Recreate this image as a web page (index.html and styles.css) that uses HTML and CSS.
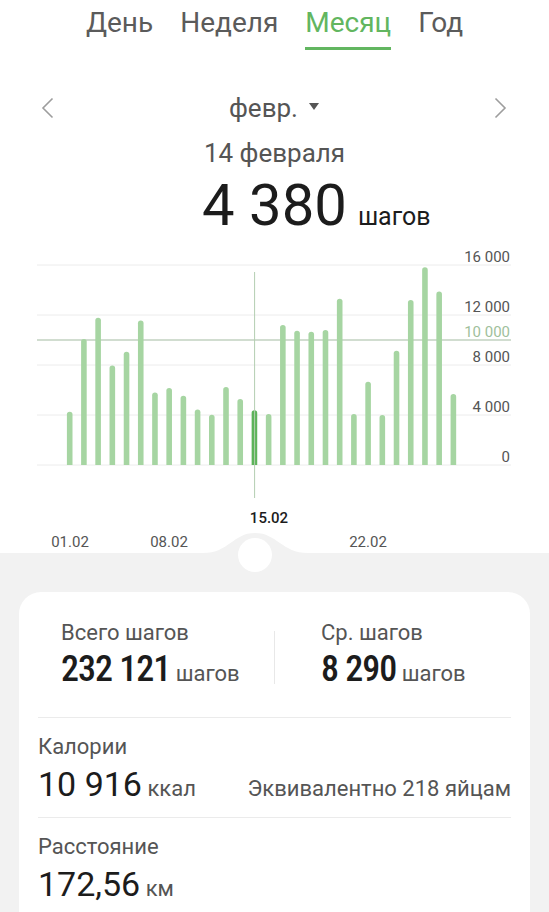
FILE: index.html
```html
<!DOCTYPE html>
<html lang="ru">

<head>
    <meta charset="UTF-8">
    <meta name="viewport" content="width=device-width, initial-scale=1.0">
    <title>Шаги</title>
    <link rel="stylesheet" href="styles.css">
</head>

<body>
    <!-- Переключатель периода -->
    <nav class="tabs">
        <span class="tab">День</span>
        <span class="tab">Неделя</span>
        <span class="tab tab--active">Месяц</span>
        <span class="tab">Год</span>
    </nav>

    <div class="period">
        <svg class="period__arrow" width="13" height="22" viewBox="0 0 13 22">
            <path d="M11.5 1.5 L2 11 L11.5 20.5" />
        </svg>
        <div class="period__month">февр.<span class="period__caret"></span></div>
        <svg class="period__arrow" width="13" height="22" viewBox="0 0 13 22">
            <path d="M1.5 1.5 L11 11 L1.5 20.5" />
        </svg>
    </div>

    <div class="day">14 февраля</div>
    <div class="total">
        <span class="total__value">4 380</span>
        <span class="total__unit">шагов</span>
    </div>

    <!-- График по дням -->
    <svg class="chart" width="549" height="313" viewBox="0 0 549 313">
        <g class="chart__grid">
            <line x1="37" y1="25" x2="511" y2="25" />
            <line x1="37" y1="75" x2="511" y2="75" />
            <line x1="37" y1="125" x2="511" y2="125" />
            <line x1="37" y1="175" x2="511" y2="175" />
            <line x1="37" y1="225" x2="511" y2="225" />
        </g>
        <line class="chart__goal" x1="37" y1="100" x2="511" y2="100" />

        <g id="bars"></g>
        <line class="chart__cursor" x1="254.6" y1="32" x2="254.6" y2="258" />

        <g class="chart__y">
            <text x="510" y="22">16 000</text>
            <text x="510" y="72">12 000</text>
            <text x="510" y="97" class="chart__goal-label">10 000</text>
            <text x="510" y="122">8 000</text>
            <text x="510" y="172">4 000</text>
            <text x="510" y="222">0</text>
        </g>
        <g class="chart__x">
            <text x="70" y="307">01.02</text>
            <text x="169" y="307">08.02</text>
            <text x="269" y="283" class="chart__x-active">15.02</text>
            <text x="368" y="307">22.02</text>
        </g>
    </svg>

    <section class="summary">
        <svg class="summary__handle" width="105" height="40" viewBox="0 0 105 40">
            <path d="M0 20 C26 20 30 0 52 0 C74 0 79 20 105 20 V40 H0 Z" fill="#f2f2f2" />
            <circle cx="52" cy="22" r="17" fill="#fff" />
        </svg>

        <div class="card">
            <div class="card__pair">
                <div class="stat stat--left">
                    <div class="stat__label">Всего шагов</div>
                    <div class="stat__value"><span class="stat__num">232 121</span> шагов</div>
                </div>
                <div class="card__split"></div>
                <div class="stat stat--right">
                    <div class="stat__label">Ср. шагов</div>
                    <div class="stat__value"><span class="stat__num">8 290</span> шагов</div>
                </div>
            </div>

            <div class="card__row">
                <div class="stat__label">Калории</div>
                <div class="card__line">
                    <div class="metric"><span class="metric__num">10 916</span> ккал</div>
                    <div class="metric__note">Эквивалентно 218 яйцам</div>
                </div>
            </div>

            <div class="card__row">
                <div class="stat__label">Расстояние</div>
                <div class="card__line">
                    <div class="metric"><span class="metric__num">172,56</span> км</div>
                </div>
            </div>
        </div>
    </section>

    <script>
        // шаги за каждый день февраля
        const steps = [4264, 10080, 11790, 7970, 9070, 11570, 5810, 6160, 5550, 4450,
            4030, 6240, 5280, 4380, 4080, 11200, 10750, 10670, 10800, 13300,
            4080, 6670, 4000, 9150, 13200, 15810, 13870, 5680];
        const selectedDay = 13;

        const bars = document.getElementById("bars");
        const base = 225;   // линия нуля
        const scale = 0.0125; // px на шаг
        const w = 5.6;
        const r = w / 2;

        steps.forEach((v, i) => {
            const x = 69.7 + i * 14.21;
            const top = base - v * scale;
            const bar = document.createElementNS("http://www.w3.org/2000/svg", "path");
            bar.setAttribute("d",
                `M${x - r},${base} V${top + r} A${r},${r} 0 0 1 ${x + r},${top + r} V${base} Z`);
            bar.setAttribute("class", i === selectedDay ? "bar bar--active" : "bar");
            bars.appendChild(bar);
        });
    </script>
</body>

</html>
```

FILE: styles.css
```css
* {
    padding: 0;
    margin: 0;
    box-sizing: border-box;
}

body {
    font-family: Roboto, "Noto Sans", sans-serif;
    background-color: #fff;
    color: #1c1c1c;
}

/* Вкладки */
.tabs {
    display: flex;
    justify-content: center;
    gap: 27px;
    padding-top: 7px;
}

.tab {
    font-size: 28px;
    line-height: 32px;
    color: #5b5b5b;
    padding-bottom: 8px;
    border-bottom: 3px solid transparent;
}

.tab--active {
    color: #62b660;
    border-color: #62b660;
}

/* Месяц и стрелки */
.period {
    display: flex;
    align-items: center;
    justify-content: space-between;
    height: 40px;
    margin-top: 38px;
    padding: 0 42px 0 41px;
}

.period__arrow path {
    fill: none;
    stroke: #9d9d9d;
    stroke-width: 1.6;
}

.period__month {
    display: flex;
    align-items: center;
    gap: 11px;
    font-size: 26px;
    line-height: 40px;
    color: #555;
}

.period__caret {
    width: 0;
    height: 0;
    margin-top: -3px;
    border-left: 5.5px solid transparent;
    border-right: 5.5px solid transparent;
    border-top: 7px solid #555;
}

.day {
    margin-top: 8px;
    text-align: center;
    font-size: 26px;
    line-height: 34px;
    color: #555;
}

.total {
    display: grid;
    grid-template-columns: 1fr auto 1fr;
    align-items: baseline;
    margin-top: 5px;
}

.total__value {
    grid-column: 2;
    font-size: 58px;
    line-height: 60px;
}

.total__unit {
    padding-left: 11px;
    font-size: 25px;
}

/* График */
.chart {
    display: block;
    margin-top: 5px;
    font-family: Roboto, sans-serif;
}

.chart__grid line {
    stroke: #ececec;
    stroke-width: 1;
}

.chart__goal {
    stroke: #a3bba1;
    stroke-width: 1;
}

.chart__cursor {
    stroke: #b3ceb1;
    stroke-width: 1;
}

.bar {
    fill: #a6d5a2;
}

.bar--active {
    fill: #5db35a;
}

.chart__y text {
    font-size: 15px;
    fill: #555;
    text-anchor: end;
}

.chart__y .chart__goal-label {
    fill: #9fbf9c;
}

.chart__x text {
    font-size: 15px;
    fill: #555;
    text-anchor: middle;
}

.chart__x .chart__x-active {
    fill: #1c1c1c;
    font-weight: 500;
}

/* Итоги */
.summary {
    position: relative;
    background-color: #f2f2f2;
    padding: 39px 19px 0;
}

.summary__handle {
    position: absolute;
    top: -20px;
    left: 203px;
}

.card {
    background-color: #fff;
    border-radius: 22px;
    padding: 0 19px 40px;
}

.card__pair {
    display: grid;
    grid-template-columns: 1fr 1px 1fr;
    padding: 28px 0 23px;
    border-bottom: 1px solid #ebebeb;
}

.card__split {
    align-self: center;
    height: 53px;
    background-color: #e8e8e8;
}

.stat--left {
    padding-left: 23px;
}

.stat--right {
    padding-left: 46px;
}

.stat__label {
    font-size: 22px;
    line-height: 26px;
    color: #555;
}

.stat__value {
    margin-top: 3px;
    font-size: 22px;
    line-height: 40px;
    color: #555;
}

.stat__num {
    font-family: "Roboto Condensed", "Liberation Sans Narrow", Roboto, sans-serif;
    font-size: 36px;
    font-weight: 500;
    letter-spacing: -1px;
    color: #1c1c1c;
}

.card__row {
    padding: 16px 0 8px;
    border-bottom: 1px solid #ebebeb;
}

.card__row:last-child {
    border-bottom: none;
}

.card__line {
    display: flex;
    justify-content: space-between;
    align-items: baseline;
    margin-top: 4px;
}

.metric {
    font-size: 22px;
    line-height: 40px;
    color: #555;
}

.metric__num {
    font-size: 34px;
    color: #1c1c1c;
}

.metric__note {
    font-size: 22px;
    color: #555;
}
```
